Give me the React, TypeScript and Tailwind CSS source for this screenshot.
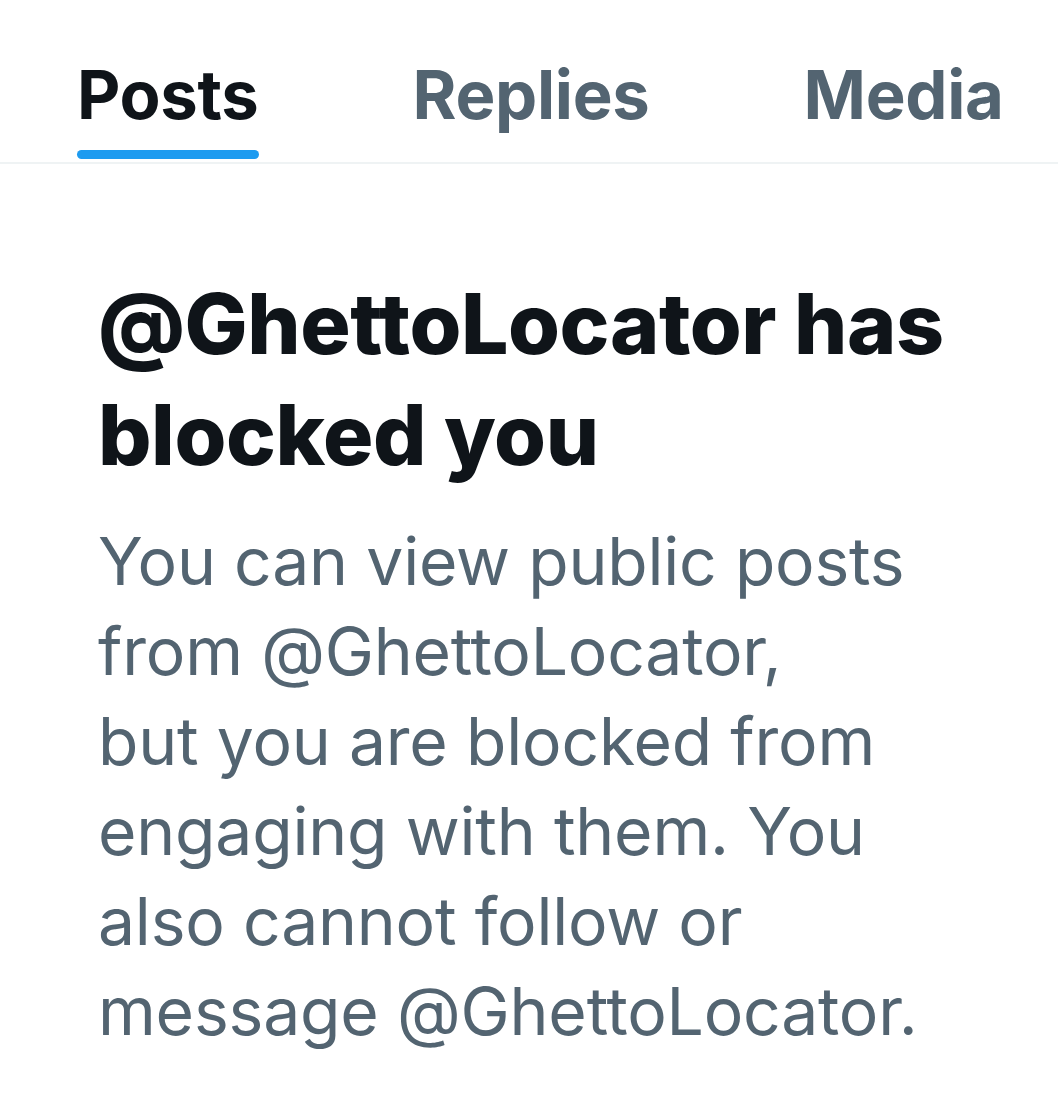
import React from 'react';

const tabs = ['Posts', 'Replies', 'Media'];

const App: React.FC = () => {
    return (
        <div className="w-[1058px] h-[1107px] bg-white overflow-hidden font-['Inter',sans-serif]">
            <div className="flex h-[164px] border-b-2 border-[#eff3f4] overflow-hidden">
                {tabs.map((tab, i) => (
                    <div key={tab} className="shrink-0 px-[77px] pt-[55px] flex flex-col items-stretch">
                        <span
                            className={
                                i === 0
                                    ? 'text-[67px] leading-[80px] font-bold text-[#0f1419] tracking-[-0.3px]'
                                    : 'text-[67px] leading-[80px] font-bold text-[#536471] tracking-[-0.3px]'
                            }
                        >
                            {tab}
                        </span>
                        {i === 0 && <div className="mt-[15px] h-[9px] rounded-full bg-[#1d9bf0]" />}
                    </div>
                ))}
            </div>

            <div className="px-[98px] pt-[104px]">
                <h2 className="text-[84px] leading-[111px] font-extrabold text-[#0f1419] tracking-[-0.45px] whitespace-nowrap">
                    @GhettoLocator has
                    <br />
                    blocked you
                </h2>
                <p className="mt-[26px] text-[66px] leading-[90px] text-[#536471] tracking-[-0.2px] whitespace-nowrap">
                    You can view public posts
                    <br />
                    from @GhettoLocator,
                    <br />
                    but you are blocked from
                    <br />
                    engaging with them. You
                    <br />
                    also cannot follow or
                    <br />
                    message @GhettoLocator.
                </p>
            </div>
        </div>
    );
};

export default App;
